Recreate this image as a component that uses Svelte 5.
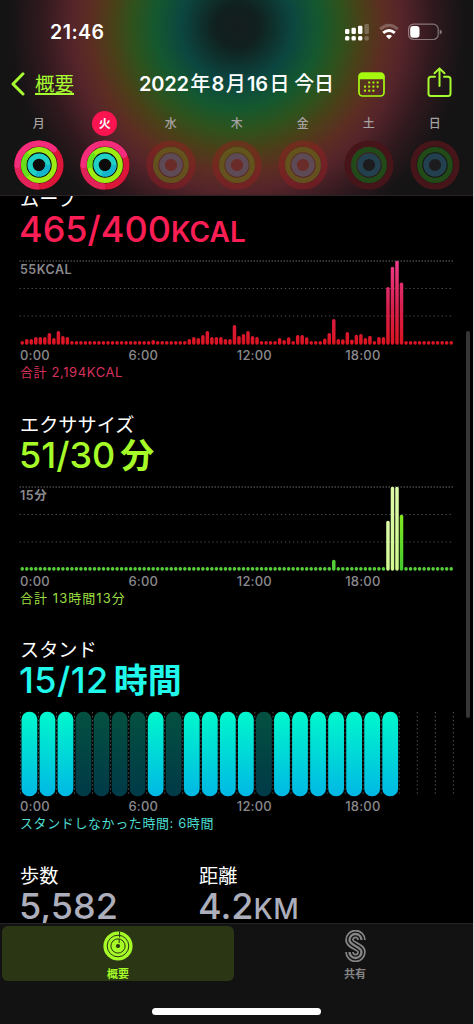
<script>
  const days = [
    { name: '月', done: true, move: 0.12, exercise: 0.62, stand: 0.3 },
    { name: '火', done: true, today: true, move: 0.17, exercise: 0.72, stand: 0.3 },
    { name: '水', tint: 'warm' },
    { name: '木', tint: 'warm' },
    { name: '金', tint: 'warm' },
    { name: '土' },
    { name: '日' },
  ];

  const hours = ['0:00', '6:00', '12:00', '18:00'];
  const pitch = 4.515;
  const low = 3.7;
  const shareShape = 'M16 10 A6 6 0 0 0 4 10 C4 15.5 16 16.5 16 22 A6 6 0 0 1 4 22';

  // one value for every 15 minutes
  const move = Array(96).fill(low);
  [3.7, 5.7, 5.7, 7.7, 7.7, 7.7, 11.7, 6.7, 13.7, 8.7, 7.7].forEach((v, i) => (move[i] = v));
  move[29] = 4.7;
  [
    5.7, 7.7, 6.7, 9.7, 13.7, 7.7, 7.7, 7.7, 5.7, 5.7, 19.7, 8.7, 10.7, 13.7, 8.7, 7.7,
    low, low, low, low, 6.7, 4.7, 7.5, low, 9.7, 9.7, 7.5, low, low, low, 6.3, 11.7, 25.7,
    5.7, 5.5, 12.7, 5.3, 10, 10.7, 6.7, 9, low, 7.7, 7.7, 57.7, 78, 84, 62.3,
  ].forEach((v, i) => (move[37 + i] = v));

  const exercise = Array(96).fill(low);
  exercise[69] = 11;
  exercise[81] = 50;
  exercise[82] = 84;
  exercise[83] = 84;
  exercise[84] = 56;

  const stand = '111000010111101111111...';

  const charts = [
    { id: 'move', title: 'ムーブ', value: '465/400', unit: 'KCAL', max: '55KCAL', total: '合計 2,194KCAL', bars: move },
    { id: 'exercise', title: 'エクササイズ', value: '51/30', unit: '分', max: '15分', total: '合計 13時間13分', bars: exercise },
    { id: 'stand', title: 'スタンド', value: '15/12', unit: '時間', total: 'スタンドしなかった時間: 6時間' },
  ];

  function fill(id, i) {
    if (id === 'move') return 'url(#move-fill)';
    if (i >= 81 && i <= 83) return 'url(#bright-fill)';
    return i === 84 ? 'url(#green-fill)' : '#55d038';
  }
</script>

<div class="screen">
  <header>
    <div class="status">
      <span class="time">21:46</span>
      <div class="status-icons">
        <svg width="25" height="18" viewBox="0 0 25 18" fill="#fff">
          <rect x="0" y="6" width="4.4" height="5" rx="1.3" />
          <rect x="6.5" y="4.7" width="4.4" height="6.3" rx="1.3" />
          <rect x="13" y="2.7" width="4.4" height="8.3" rx="1.3" />
          <rect x="19.5" y="1" width="4.4" height="10" rx="1.3" opacity="0.25" />
          <rect x="0" y="13" width="4.4" height="4.5" rx="1.6" />
          <rect x="6.5" y="13" width="4.4" height="4.5" rx="1.6" />
          <rect x="13" y="13" width="4.4" height="4.5" rx="1.6" />
          <rect x="19.5" y="13" width="4.4" height="4.5" rx="1.6" opacity="0.25" />
        </svg>
        <svg width="20" height="18" viewBox="0 0 20 18" fill="none" stroke="#fff">
          <path d="M1.2 6.2 Q10 -1.8 18.8 6.2" stroke-width="3" opacity="0.25" />
          <path d="M4.2 9.9 Q10 5 15.8 9.9" stroke-width="2.9" />
          <path d="M6.9 13 Q10 10.3 13.1 13 L10 16.3 Z" fill="#fff" stroke="none" />
        </svg>
        <svg width="34" height="18" viewBox="0 0 34 18">
          <rect x="0.6" y="1.1" width="29.6" height="15.4" rx="5" fill="none" stroke="#fff" stroke-opacity="0.4" stroke-width="1.2" />
          <rect x="2.2" y="3" width="9.3" height="11.7" rx="3" fill="#fff" />
          <path d="M31.7 6.4 Q34 7 34 8.9 Q34 10.8 31.7 11.4 Z" fill="#fff" opacity="0.4" />
        </svg>
      </div>
    </div>

    <nav>
      <button class="back">
        <svg width="14" height="24" viewBox="0 0 14 24">
          <path d="M12 1.8 L2 12 L12 22" fill="none" stroke="#a6fa30" stroke-width="3" stroke-linecap="round" stroke-linejoin="round" />
        </svg>
        <span>概要</span>
      </button>
      <h1>2022<span class="cjk">年</span>8<span class="cjk">月</span>16<span class="cjk">日 今日</span></h1>
      <svg class="calendar" width="27" height="25" viewBox="0 0 27 25">
        <rect x="1" y="1" width="25" height="23" rx="3.5" fill="none" stroke="#a6fa10" stroke-width="1.7" />
        <path d="M1 7.2 V4.5 Q1 1 4.5 1 H22.5 Q26 1 26 4.5 V7.2 Z" fill="#a6fa10" />
        <g fill="#a6fa10">
          {#each [9.5, 13.6, 17.7] as y, row}
            {#each [6, 10.2, 14.4, 18.6] as x, col}
              {#if !(row === 0 && col === 0) && !(row === 2 && col === 3)}
                <rect x={x} y={y} width="2" height="2" />
              {/if}
            {/each}
          {/each}
        </g>
      </svg>
      <svg class="share" width="25" height="31" viewBox="0 0 25 31" fill="none" stroke="#a6fa30" stroke-width="2" stroke-linecap="round" stroke-linejoin="round">
        <path d="M8 9.8 H4 Q1.5 9.8 1.5 12.3 V26.5 Q1.5 29 4 29 H21 Q23.5 29 23.5 26.5 V12.3 Q23.5 9.8 21 9.8 H17" />
        <path d="M12.5 19 V1.8 M7.5 6.2 L12.5 1.4 L17.5 6.2" />
      </svg>
    </nav>

    <div class="week">
      {#each days as day}
        <div class="day" class:warm={day.tint === 'warm'}>
          <span class="day-name" class:today={day.today}>{day.name}</span>
          <svg width="50" height="50" viewBox="-25 -25 50 50" fill="none">
            {#if day.done}
              <circle r="24.7" fill="#0c0c0c" />
              <circle r="21.5" stroke="#dc1638" stroke-width="6.2" />
              <circle r="21.5" stroke="#e02258" stroke-width="6.2" pathLength="1" stroke-dasharray="0.25 1" transform="rotate(90)" />
              <circle r="21.5" stroke="#f42c7c" stroke-width="6.2" stroke-linecap="round" pathLength="1" stroke-dasharray="{day.move + 0.25} 1" transform="rotate(-180)" />
              <circle r="15.3" stroke="#9cec14" stroke-width="5.2" />
              <circle r="15.3" stroke="#66e018" stroke-width="5.2" pathLength="1" stroke-dasharray="{0.88 - day.exercise} 1" transform="rotate({day.exercise * 360 - 90})" />
              <circle r="8.9" stroke="#20d0c4" stroke-width="5.3" />
              <circle r="8.9" stroke="#14b4cc" stroke-width="5.3" pathLength="1" stroke-dasharray="{day.stand} 1" />
            {:else}
              <circle class="ring-move" r="21.5" stroke-width="6.2" />
              <circle class="ring-exercise" r="15.3" stroke-width="5.2" />
              <circle class="ring-stand" r="8.9" stroke-width="5.6" />
            {/if}
          </svg>
        </div>
      {/each}
    </div>
  </header>

  <main>
    {#each charts as chart}
      <section class={chart.id}>
        <h2>{chart.title}</h2>
        <p class="value">{chart.value}<span class="unit">{chart.unit}</span></p>
        <div class="chart">
          <svg width="436" height="86" viewBox="0 0 436 86">
            {#if chart.bars}
              <line x1="0.5" x2="434.5" y1="1" y2="1" stroke="#6c6c6f" stroke-width="1.2" stroke-dasharray="1.5 1.5" />
              <line x1="0.5" x2="434.5" y1="28.5" y2="28.5" stroke="#505053" stroke-width="1.2" stroke-dasharray="1.3 2.72" />
              <line x1="0.5" x2="434.5" y1="56" y2="56" stroke="#505053" stroke-width="1.2" stroke-dasharray="1.3 2.72" />
              {#each chart.bars as h, i}
                <rect x={1.5 + i * pitch} y={84.8 - h} width="3.5" height={h} rx="1.7" fill={fill(chart.id, i)} />
              {/each}
            {:else}
              {#each Array(25) as _, i}
                <line x1={1.4 + i * 18.04} x2={1.4 + i * 18.04} y1="1" y2="85" stroke="#5a5a5d" stroke-width="1" stroke-dasharray="1.3 2.72" />
              {/each}
              {#each stand as hour, i}
                {#if hour !== '.'}
                  <rect x={2.5 + i * 18.04} y="0.8" width="15.8" height="84.4" rx="7.5" fill={hour === '1' ? 'url(#stand-fill)' : 'url(#idle-fill)'} />
                {/if}
              {/each}
            {/if}
          </svg>
          {#if chart.max}
            <span class="max">{chart.max}</span>
          {/if}
        </div>
        <div class="hours">
          {#each hours as hour}
            <span>{hour}</span>
          {/each}
        </div>
        <p class="total">{chart.total}</p>
      </section>
    {/each}

    <div class="stats">
      <div>
        <h2>歩数</h2>
        <p class="value">5,582</p>
      </div>
      <div>
        <h2>距離</h2>
        <p class="value">4.2<span class="unit">KM</span></p>
      </div>
    </div>
    <div class="scrollbar"></div>
  </main>

  <footer>
    <div class="tabs">
      <button class="tab active">
        <svg width="30" height="32" viewBox="-15 -16 30 32" fill="none" stroke="#26340f">
          <circle r="14.6" fill="#a6fa28" stroke="none" />
          <circle r="10.8" stroke-width="1" />
          <circle r="7.1" stroke-width="1" />
          <circle r="2.1" fill="#26340f" stroke="none" />
          <path d="M1.6 -14.5 V-8.5 M1.2 -7 V-3" stroke-width="1" />
        </svg>
        <span>概要</span>
      </button>
      <button class="tab">
        <svg width="21" height="32" viewBox="-0.5 0 21 32" fill="none">
          <path d={shareShape} stroke="#858585" stroke-width="8.6" />
          <path d={shareShape} stroke="#121212" stroke-width="5.2" />
          <path d={shareShape} stroke="#858585" stroke-width="2.4" />
        </svg>
        <span>共有</span>
      </button>
    </div>
    <div class="home"></div>
  </footer>

  <svg class="defs" width="0" height="0">
    <defs>
      <linearGradient id="move-fill" gradientUnits="userSpaceOnUse" x1="0" y1="0" x2="0" y2="85">
        <stop offset="0" stop-color="#f03c8c" />
        <stop offset="0.55" stop-color="#d8204e" />
        <stop offset="1" stop-color="#dc1420" />
      </linearGradient>
      <linearGradient id="bright-fill" x1="0" y1="0" x2="0" y2="1">
        <stop offset="0" stop-color="#dcfaa8" />
        <stop offset="1" stop-color="#d0f890" />
      </linearGradient>
      <linearGradient id="green-fill" x1="0" y1="0" x2="0" y2="1">
        <stop offset="0" stop-color="#84e820" />
        <stop offset="1" stop-color="#40c830" />
      </linearGradient>
      <linearGradient id="stand-fill" x1="0" y1="0" x2="0" y2="1">
        <stop offset="0" stop-color="#00f8cc" />
        <stop offset="1" stop-color="#00b8e4" />
      </linearGradient>
      <linearGradient id="idle-fill" x1="0" y1="0" x2="0" y2="1">
        <stop offset="0" stop-color="#045040" />
        <stop offset="1" stop-color="#003a48" />
      </linearGradient>
    </defs>
  </svg>
</div>

<style>
  :global(body) {
    background: #000;
  }
  .screen {
    box-sizing: border-box;
    display: flex;
    flex-direction: column;
    width: 474px;
    height: 1024px;
    overflow: hidden;
    background: #000;
    border-right: 1px solid #d8d8d8;
    color: #fff;
    font-family: Inter, 'Noto Sans CJK JP', sans-serif;
  }
  h1,
  h2,
  p {
    margin: 0;
    font-weight: 400;
  }
  svg {
    display: block;
    flex: none;
  }
  button {
    padding: 0;
    border: none;
    background: none;
    font-family: inherit;
    color: #a6fa30;
  }
  .defs {
    position: absolute;
  }

  header {
    flex: none;
    height: 196px;
    box-sizing: border-box;
    border-bottom: 1px solid #2a2224;
    background: radial-gradient(
      circle at 237px 26px,
      #141c1c 0,
      #10211f 22px,
      #0c4640 56px,
      #14582f 82px,
      #2f521c 105px,
      #4a4018 125px,
      #5c2e22 146px,
      #54242a 166px,
      #30191e 196px,
      #161415 226px,
      #141414 250px
    );
  }
  .status {
    display: flex;
    justify-content: space-between;
    align-items: center;
    height: 63px;
    padding: 0 31px 0 50px;
  }
  .time {
    font-size: 19.5px;
    font-weight: 600;
    letter-spacing: 0.5px;
  }
  .status-icons {
    display: flex;
    gap: 9px;
  }
  nav {
    display: flex;
    align-items: center;
    height: 42px;
    padding: 0 21px 0 11px;
  }
  .back {
    display: flex;
    align-items: center;
    gap: 10px;
    width: 128px;
    font-size: 19.5px;
  }
  .back span {
    line-height: 26px;
    text-decoration: underline;
    text-decoration-thickness: 1.5px;
    text-underline-offset: 2px;
  }
  h1 {
    width: 219px;
    font-size: 20px;
    font-weight: 600;
    letter-spacing: -0.2px;
    line-height: 28px;
    white-space: nowrap;
  }
  h1 .cjk {
    font-weight: 500;
    margin: 0 1.5px;
  }
  .share {
    margin: -4px 0 0 auto;
  }
  .week {
    display: grid;
    grid-template-columns: repeat(7, 66px);
    padding: 6px 0 0 5.7px;
  }
  .day {
    display: flex;
    flex-direction: column;
    align-items: center;
    gap: 4px;
  }
  .day-name {
    width: 25px;
    height: 25px;
    border-radius: 50%;
    color: #a6a2a2;
    font-size: 12px;
    font-weight: 500;
    line-height: 26px;
    text-align: center;
  }
  .today {
    background: #fa1450;
    color: #fff;
    font-weight: 700;
  }
  .ring-move {
    stroke: #46151a;
  }
  .ring-exercise {
    stroke: #224a18;
  }
  .ring-stand {
    stroke: #22404e;
    fill: #1c1c1e;
  }
  .warm .ring-move {
    stroke: #a01c20;
    stroke-opacity: 0.4;
  }
  .warm .ring-exercise {
    stroke: #66581c;
    stroke-opacity: 0.85;
  }
  .warm .ring-stand {
    stroke: #5e4a54;
    fill: #6a2c28;
  }

  main {
    position: relative;
    flex: none;
    height: 727px;
    overflow: hidden;
  }
  section {
    height: 225.5px;
    padding-left: 19px;
  }
  section:first-child {
    margin-top: -10px;
  }
  h2 {
    height: 25px;
    padding-left: 1px;
    font-size: 19.2px;
    line-height: 27px;
  }
  .value {
    height: 36px;
    font-size: 36px;
    font-weight: 500;
    line-height: 36px;
    white-space: nowrap;
  }
  .unit {
    font-size: 28px;
    letter-spacing: 0.5px;
  }
  .chart {
    position: relative;
    margin-top: 13px;
  }
  .max {
    position: absolute;
    left: 1px;
    top: 2px;
    color: #8a8a8e;
    font-size: 12.5px;
    font-weight: 600;
    letter-spacing: 0.5px;
    line-height: 16px;
  }
  .hours {
    display: grid;
    grid-template-columns: repeat(4, 108.4px);
    height: 17px;
    padding-left: 1px;
    color: #8a8a8e;
    font-size: 13px;
    font-weight: 500;
    letter-spacing: 0.2px;
    line-height: 19px;
  }
  .total {
    padding-left: 1px;
    font-size: 13px;
    letter-spacing: 0.6px;
    line-height: 18px;
    white-space: nowrap;
  }
  .move .value {
    color: #fa1e54;
  }
  .move .unit {
    font-weight: 600;
    letter-spacing: 0;
  }
  .move .total {
    color: #d8305c;
  }
  .exercise .value {
    color: #a6fa28;
  }
  .exercise .total {
    color: #9ade40;
    letter-spacing: 1.05px;
  }
  .exercise .unit,
  .stand .unit {
    margin-left: 5px;
    font-size: 34px;
    font-weight: 600;
    letter-spacing: 0;
  }
  .stand .value {
    color: #20f8ec;
    letter-spacing: 0.4px;
  }
  .stand .total {
    color: #4cdcd0;
  }
  .stats {
    display: grid;
    grid-template-columns: 179px 1fr;
    padding-left: 19px;
  }
  .stats .value {
    color: #acaebc;
  }
  .scrollbar {
    position: absolute;
    right: 3px;
    top: 135px;
    width: 4px;
    height: 387px;
    border-radius: 2px;
    background: #363636;
  }

  footer {
    display: flex;
    flex-direction: column;
    align-items: center;
    height: 101px;
    box-sizing: border-box;
    border-top: 1px solid #242426;
    background: #121212;
  }
  .tabs {
    display: grid;
    grid-template-columns: 232px 232px;
    gap: 5px;
    width: 469px;
    padding-top: 2px;
  }
  .tab {
    display: flex;
    flex-direction: column;
    align-items: center;
    height: 55px;
    padding-top: 4px;
    border-radius: 6px;
    color: #858585;
    font-size: 11px;
    font-weight: 700;
  }
  .tab span {
    margin-top: 4px;
    line-height: 16px;
  }
  .active {
    background: #2b3714;
    color: #a6fa28;
  }
  .home {
    width: 169px;
    height: 6.5px;
    margin-top: 27px;
    border-radius: 4px;
    background: #fff;
  }
</style>
